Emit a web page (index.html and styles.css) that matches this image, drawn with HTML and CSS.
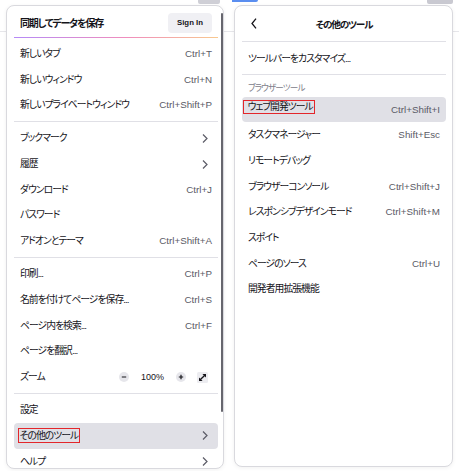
FILE: index.html
```html
<!DOCTYPE html>
<html lang="ja">
<head>
<meta charset="utf-8">
<title>Firefox メニュー</title>
<link rel="stylesheet" href="styles.css">
</head>
<body>
<div class="chrome chrome-line"></div>
<div class="chrome chrome-btn1"></div>
<div class="chrome chrome-blue"></div>
<div class="chrome chrome-btn2"></div>

<div class="stage">
  <div class="panel panel-main">
    <div class="scrollbar"></div>
    <div class="sync">
      <span class="sync-title">同期してデータを保存</span>
      <span class="signin">Sign In</span>
    </div>
    <div class="grad"></div>
    <div class="row"><span>新しいタブ</span><span class="key">Ctrl+T</span></div>
    <div class="row"><span>新しいウィンドウ</span><span class="key">Ctrl+N</span></div>
    <div class="row"><span>新しいプライベートウィンドウ</span><span class="key">Ctrl+Shift+P</span></div>
    <div class="sep"></div>
    <div class="row"><span>ブックマーク</span><svg class="chev" viewBox="0 0 6 9" width="6" height="9"><path d="M1 .5L5 4.5 1 8.5"/></svg></div>
    <div class="row"><span>履歴</span><svg class="chev" viewBox="0 0 6 9" width="6" height="9"><path d="M1 .5L5 4.5 1 8.5"/></svg></div>
    <div class="row"><span>ダウンロード</span><span class="key">Ctrl+J</span></div>
    <div class="row"><span>パスワード</span></div>
    <div class="row"><span>アドオンとテーマ</span><span class="key">Ctrl+Shift+A</span></div>
    <div class="sep"></div>
    <div class="row"><span>印刷...</span><span class="key">Ctrl+P</span></div>
    <div class="row"><span>名前を付けてページを保存...</span><span class="key">Ctrl+S</span></div>
    <div class="row"><span>ページ内を検索...</span><span class="key">Ctrl+F</span></div>
    <div class="row"><span>ページを翻訳...</span></div>
    <div class="row"><span>ズーム</span>
      <div class="zoom-ctl">
        <svg class="zbtn" viewBox="0 0 10 10" width="10" height="10"><circle cx="5" cy="5" r="5"/><path d="M2.8 5h4.4"/></svg>
        <span class="zval">100%</span>
        <svg class="zbtn" viewBox="0 0 10 10" width="10" height="10"><circle cx="5" cy="5" r="5"/><path d="M2.8 5h4.4M5 2.8v4.4"/></svg>
        <svg class="zfull" viewBox="0 0 11 11" width="11" height="11"><rect width="11" height="11" rx="1.5"/><path class="ln" d="M3.2 7.8L7.8 3.2"/><path class="hd" d="M5.4 2h3.6v3.6zM2 5.4v3.6h3.6z"/></svg>
      </div>
    </div>
    <div class="sep"></div>
    <div class="row"><span>設定</span></div>
    <div class="row row-hover"><span class="mark mark-l">その他のツール</span><svg class="chev" viewBox="0 0 6 9" width="6" height="9"><path d="M1 .5L5 4.5 1 8.5"/></svg></div>
    <div class="row row-last"><span>ヘルプ</span><svg class="chev" viewBox="0 0 6 9" width="6" height="9"><path d="M1 .5L5 4.5 1 8.5"/></svg></div>
  </div>

  <div class="panel panel-tools">
    <div class="tools-head">
      <svg class="back" viewBox="0 0 6 11" width="6" height="11"><path d="M5 .6L1 5.5 5 10.4"/></svg>
      <span class="tools-title">その他のツール</span>
      <span></span>
    </div>
    <div class="sep sep-a"></div>
    <div class="row"><span>ツールバーをカスタマイズ...</span></div>
    <div class="sep sep-b"></div>
    <div class="group-label">ブラウザーツール</div>
    <div class="row row-hover"><span class="mark mark-r">ウェブ開発ツール</span><span class="key">Ctrl+Shift+I</span></div>
    <div class="row"><span>タスクマネージャー</span><span class="key">Shift+Esc</span></div>
    <div class="row"><span>リモートデバッグ</span></div>
    <div class="row"><span>ブラウザーコンソール</span><span class="key">Ctrl+Shift+J</span></div>
    <div class="row"><span>レスポンシブデザインモード</span><span class="key">Ctrl+Shift+M</span></div>
    <div class="row"><span>スポイト</span></div>
    <div class="row"><span>ページのソース</span><span class="key">Ctrl+U</span></div>
    <div class="row"><span>開発者用拡張機能</span></div>
  </div>
</div>
</body>
</html>
```

FILE: styles.css
```css
* { box-sizing: border-box; margin: 0; padding: 0; }
html, body { width: 459px; height: 471px; overflow: hidden; }
body {
  background: #fff;
  font-family: "Liberation Sans", "Noto Sans CJK JP", sans-serif;
  font-size: 9.8px;
  color: #15141a;
  font-feature-settings: "palt";
  position: relative;
}

/* browser chrome visible behind the panels */
.chrome { position: absolute; z-index: 0; }
.chrome-line { left: 0; right: 0; top: 31px; height: 1px; background: #e6e6ea; }
.chrome-btn1 { left: 198px; top: 0; width: 22px; height: 4px; background: #cfcfd6; border-radius: 0 0 2px 2px; }
.chrome-blue { left: 232px; top: 0; width: 26px; height: 2px; background: #5a8ef0; border-radius: 0 0 3px 0; }
.chrome-btn2 { left: 427px; top: 0; width: 26px; height: 4px; background: #c9c9d1; border-radius: 0 0 2px 2px; }

.stage {
  position: relative;
  z-index: 1;
  display: flex;
  gap: 10px;
  padding: 5px 0 0 6px;
}

.panel {
  background: #fff;
  border: 1px solid #d9d9de;
  border-radius: 8px;
  box-shadow: 0 1px 4px rgba(0, 0, 0, .06);
  overflow: hidden;
  position: relative;
}
.panel-main { width: 218px; height: 464px; padding: 3px 5px 0 7px; }
.panel-tools { width: 219px; height: 462px; padding: 3px 6px 0 7px; }

.scrollbar {
  position: absolute;
  right: 0.5px;
  top: 7px;
  width: 2px;
  height: 399px;
  border-radius: 1px;
  background: #66666e;
}

.sync {
  height: 27px;
  display: flex;
  align-items: center;
  justify-content: space-between;
  padding: 0 6px;
}
.sync-title { font-size: 10px; font-weight: 700; letter-spacing: -1.2px; }
.signin {
  width: 44px;
  height: 20px;
  display: flex;
  align-items: center;
  justify-content: center;
  background: #f0f0f4;
  border-radius: 4px;
  font-size: 7.8px;
  font-weight: 700;
}
.grad {
  height: 1px;
  margin: 1px 0 3px;
  background: linear-gradient(90deg, #b58af7, #f08dbd 55%, #f8c98f);
}

.row {
  height: 25.7px;
  display: flex;
  align-items: center;
  justify-content: space-between;
  padding: 0 6px;
  white-space: nowrap;
  line-height: 12px;
  letter-spacing: -0.95px;
}
.key { color: #5b5b66; letter-spacing: 0; }
.row-hover { background: #e0e0e6; border-radius: 4px; }
.row-last { line-height: 11px; }

.sep { height: 1px; background: #e0e0e6; margin: 3.25px 0; }
.sep-a { margin: 3px 0 4px; }
.sep-b { margin: 2px 0 0; }

.chev { margin-right: 4px; fill: none; stroke: #5b5b66; stroke-width: 1.2; }

.zoom-ctl { display: flex; align-items: center; gap: 11.5px; margin-right: 4px; letter-spacing: 0; }
.zbtn circle { fill: #e6e6eb; }
.zbtn path { stroke: #15141a; stroke-width: 1.2; fill: none; }
.zval { font-size: 9px; }
.zfull rect { fill: #ececf0; }
.zfull .ln { stroke: #15141a; stroke-width: 1.3; fill: none; }
.zfull .hd { fill: #15141a; }

.mark { border: 1.5px solid #e3262b; line-height: 12px; }
.mark-l { margin-left: -2px; padding: 0 1px 0 0.5px; line-height: 13px; }
.mark-r { margin-left: -5px; padding: 0 1px 0 3.5px; margin-bottom: 6px; }

.tools-head {
  height: 29px;
  display: grid;
  grid-template-columns: 1fr auto 1fr;
  align-items: center;
}
.back { margin-left: 9px; fill: none; stroke: #15141a; stroke-width: 1.3; }
.tools-title { font-weight: 700; font-size: 9.6px; letter-spacing: -1.2px; }

.group-label {
  padding: 8px 6px 4px;
  line-height: 10px;
  font-size: 8.6px;
  letter-spacing: -0.9px;
  color: #80808a;
}
```
